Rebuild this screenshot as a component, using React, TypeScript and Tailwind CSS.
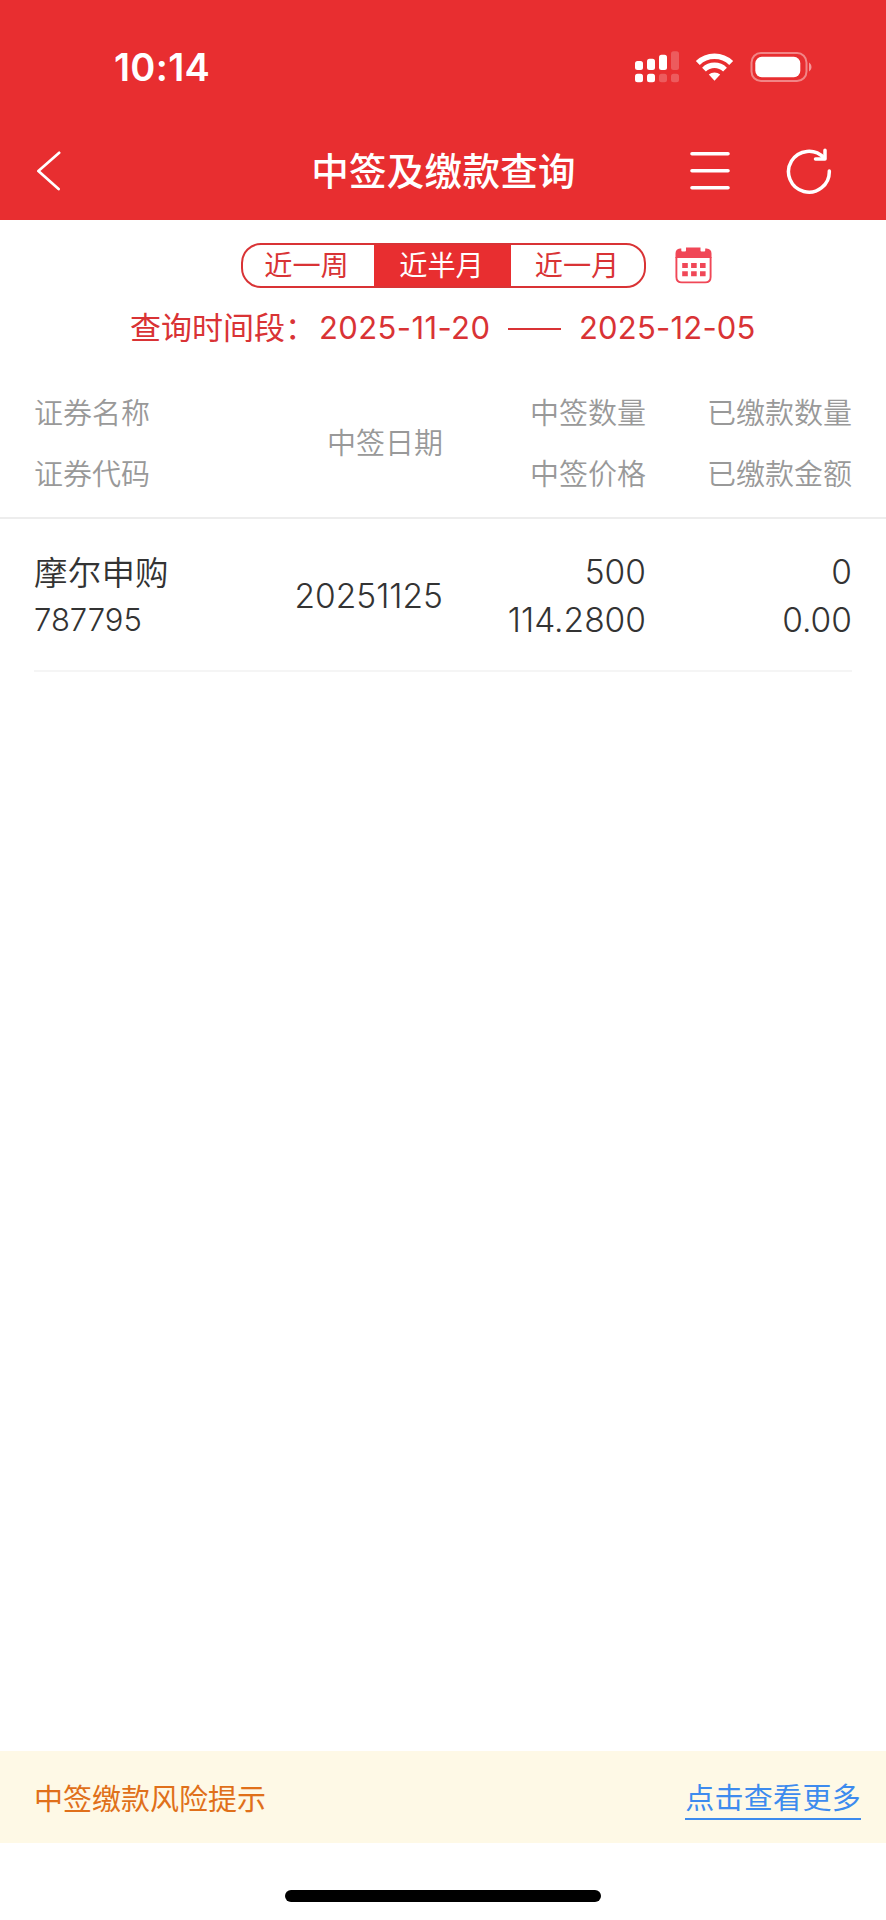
const tabs = [
  { label: '近一周', style: 'w-[131px] pr-[4px]' },
  { label: '近半月', style: 'w-[137px] pr-[2px]' },
  { label: '近一月', style: 'w-[133px] pr-px' },
]

const records = [
  { name: '摩尔申购', code: '787795', date: '20251125', count: '500', price: '114.2800', paidCount: '0', paidAmount: '0.00' },
]

export default function LotteryQueryPage() {
  return (
    <div className="w-[886px] h-[1920px] bg-white flex flex-col overflow-hidden font-[Inter,'Noto_Sans_CJK_SC',sans-serif]">
      <header className="h-[220px] bg-[#e82e30] text-white shrink-0">
        <StatusBar />
        <div className="h-[88px] grid grid-cols-[1fr_auto_1fr] items-center">
          <BackIcon />
          <h1 className="pt-[2px] pl-px text-[37.5px] leading-[52px] font-medium tracking-[0.3px]">中签及缴款查询</h1>
          <div className="flex justify-end items-center gap-[53px] pr-[51px]">
            <MenuIcon />
            <RefreshIcon />
          </div>
        </div>
      </header>

      {/* Range picker */}
      <div className="mt-[23px] pl-[241px] flex items-center gap-[29px]">
        <div className="w-[405px] h-[45px] flex border-2 border-[#d93335] rounded-[20px] overflow-hidden">
          {tabs.map((tab, idx) => (
            <button
              key={tab.label}
              className={`${tab.style} text-[28.2px] leading-[42px] ${idx === 1 ? 'bg-[#e82e30] text-white' : 'text-[#d93335]'}`}
            >
              {tab.label}
            </button>
          ))}
        </div>
        <CalendarIcon />
      </div>
      <div className="mt-[17px] mb-[21px] h-[46px] pl-[130px] flex items-center text-[31px] text-[#d93335] whitespace-nowrap">
        <span className="w-[189px]">查询时间段：</span>
        <span className="w-[189px] tracking-[0.4px]">2025-11-20</span>
        <span className="w-[53px] h-[2px] mt-[2px] bg-[#d93335] mr-[18px]" />
        <span className="tracking-[0.2px]">2025-12-05</span>
      </div>

      {/* Table */}
      <div className="h-[147px] shrink-0 px-[34px] pb-[2px] grid grid-cols-[200px_209px_203px_206px] items-center border-b-2 border-[#ededed] text-[29px] leading-[61px] text-[#999] font-[350]">
        <div>
          <p>证券名称</p>
          <p>证券代码</p>
        </div>
        <p className="text-right">中签日期</p>
        <div className="text-right">
          <p>中签数量</p>
          <p>中签价格</p>
        </div>
        <div className="text-right">
          <p>已缴款数量</p>
          <p>已缴款金额</p>
        </div>
      </div>
      {records.map((r) => (
        <div key={r.code} className="mx-[34px] h-[153px] shrink-0 pt-[3px] grid grid-cols-[200px_209px_203px_206px] items-center border-b-2 border-[#f5f5f5] text-[33.5px] leading-[48px] text-[#333] font-[350]">
          <div>
            <p className="pt-[3px] leading-[45px] tracking-[0.2px]">{r.name}</p>
            <p className="text-[31px]">{r.code}</p>
          </div>
          <p className="text-right">{r.date}</p>
          <div className="text-right">
            <p>{r.count}</p>
            <p>{r.price}</p>
          </div>
          <div className="text-right">
            <p>{r.paidCount}</p>
            <p>{r.paidAmount}</p>
          </div>
        </div>
      ))}

      {/* Risk notice */}
      <div className="mt-auto h-[92px] shrink-0 bg-[#fef9e6] pl-[34px] pr-[25px] flex justify-between items-center text-[29px]">
        <span className="pt-[5px] text-[#e0701a]">中签缴款风险提示</span>
        <a className="mt-[4px] h-[42px] leading-[42px] border-b-2 border-[#3d8bee] text-[#3d8bee] tracking-[0.3px]">点击查看更多</a>
      </div>
      <div className="h-[77px] shrink-0 pt-[47px] flex justify-center">
        <div className="w-[316px] h-[12px] rounded-full bg-black" />
      </div>
    </div>
  )
}

function StatusBar() {
  return (
    <div className="h-[127px] pl-[114px] pr-[74px] pt-[6px] flex items-center justify-between">
      <span className="text-[38px] leading-none font-semibold tracking-[0.3px]">10:14</span>
      <div className="flex items-center">
        <SignalIcon />
        <WifiIcon />
        <BatteryIcon />
      </div>
    </div>
  )
}

function SignalIcon() {
  return (
    <svg width="44" height="32" viewBox="0 0 44 32" fill="currentColor">
      <rect x="0" y="10" width="8" height="9" rx="2.5" />
      <rect x="12" y="7.7" width="8" height="11.3" rx="2.5" />
      <rect x="24" y="3.7" width="8" height="15.3" rx="2.5" />
      <rect x="36" y="0.3" width="8" height="18.7" rx="2.5" opacity="0.22" />
      <rect x="0" y="22.8" width="8" height="8.5" rx="2.5" />
      <rect x="12" y="22.8" width="8" height="8.5" rx="2.5" />
      <rect x="24" y="22.8" width="8" height="8.5" rx="2.5" opacity="0.22" />
      <rect x="36" y="22.8" width="8" height="8.5" rx="2.5" opacity="0.22" />
    </svg>
  )
}

function WifiIcon() {
  return (
    <svg className="ml-4" width="40" height="32" viewBox="0 0 40 32" fill="none" stroke="currentColor">
      <path d="M2.8 12 A24 24 0 0 1 36.2 12" strokeWidth="5.6" />
      <path d="M9 18.6 A15 15 0 0 1 30 18.6" strokeWidth="5.4" />
      <path d="M13.8 23.6 A8.5 8.5 0 0 1 25.2 23.6 L19.5 29.8 Z" fill="currentColor" stroke="none" />
    </svg>
  )
}

function BatteryIcon() {
  return (
    <svg className="ml-[15px]" width="62" height="32" viewBox="0 0 62 32" fill="currentColor">
      <rect x="1.5" y="2" width="55" height="28" rx="9.5" fill="none" stroke="currentColor" strokeWidth="2" opacity="0.42" />
      <rect x="5.3" y="5.8" width="45" height="20.4" rx="6.5" />
      <path d="M59 11.5 C62.3 13.5 62.3 18.5 59 20.5 Z" opacity="0.5" />
    </svg>
  )
}

function BackIcon() {
  return (
    <svg className="ml-9" width="26" height="40" viewBox="0 0 26 40" fill="none" stroke="currentColor" strokeWidth="2.7" strokeLinecap="round" strokeLinejoin="round">
      <polyline points="23.2 1.8 2.4 20 22.6 38" />
    </svg>
  )
}

function MenuIcon() {
  return (
    <svg width="40" height="40" viewBox="0 0 40 40" stroke="currentColor" strokeWidth="3.6" strokeLinecap="round">
      <path d="M2 2.8H38M2 19.8H38M2 36.8H38" />
    </svg>
  )
}

function RefreshIcon() {
  return (
    <svg width="52" height="48" viewBox="0 0 52 48" fill="none" stroke="currentColor" strokeWidth="3.5" strokeLinecap="round" strokeLinejoin="round">
      <path d="M46.3 24 A20.4 20.4 0 1 1 41 11" />
      <path d="M42 3.2V12H32.5" />
    </svg>
  )
}

function CalendarIcon() {
  return (
    <svg width="37" height="37" viewBox="0 0 37 37" fill="#f04757">
      <path d="M5 1.4 H6.3 V3.6 Q6.3 4.6 7.3 4.6 H10 Q11 4.6 11 3.6 V0.4 H25.5 V3.6 Q25.5 4.6 26.5 4.6 H29.2 Q30.2 4.6 30.2 3.6 V1.4 H31.5 Q36.5 1.8 36.5 6.5 V11 H0.5 V6.5 Q0.5 1.8 5 1.4 Z" />
      <path d="M1.4 10 V30 Q1.4 35.4 6.8 35.4 H30.2 Q35.6 35.4 35.6 30 V10" fill="none" stroke="#f04757" strokeWidth="1.9" />
      <path d="M7.2 16h5.6v5H7.2zM16.1 16h5.6v5h-5.6zM25 16h5.6v5H25zM7.2 24.2h5.6v5H7.2zM16.1 24.2h5.6v5h-5.6zM25 24.2h5.6v5H25z" />
    </svg>
  )
}
